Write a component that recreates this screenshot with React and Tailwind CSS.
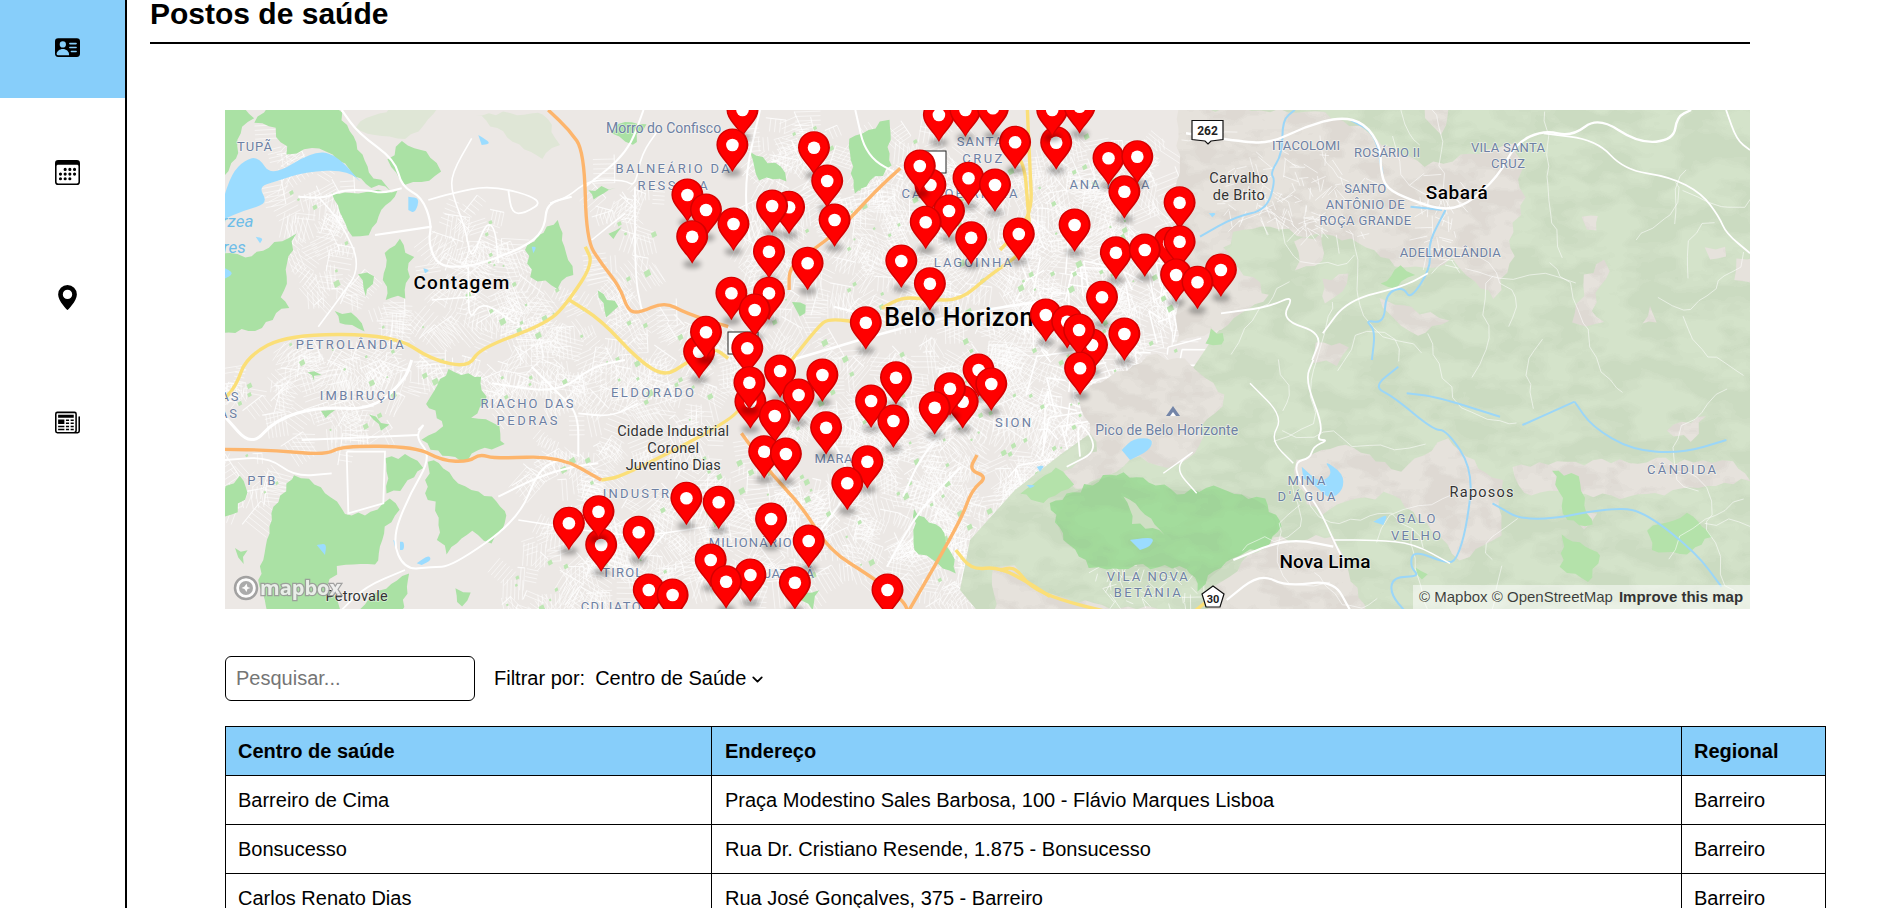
import React from "react";
import { BsPersonVcardFill, BsCalendar3, BsGeoAltFill, BsNewspaper } from "react-icons/bs";
import { ChevronDown } from "lucide-react";

const A = (x, y) => [x / 1.889 - 5, y / 3 - 10];
const B = (x, y) => [775 + x / 2.01, y / 3 - 10];
const C1 = (x, y) => [x / 3, y / 3];
const C2 = (x, y) => [x / 3, y / 3 + 250];
const C3 = (x, y) => [975 + x / 2.851, y / 3];
const C4 = (x, y) => [775 + x / 3, y / 3 + 250];

const toPath = (conv, pts, close) => {
  const p = pts.map(([x, y]) => conv(x, y));
  let d = `M${p[0][0].toFixed(1)} ${p[0][1].toFixed(1)}`;
  for (let i = 1; i < p.length; i++) {
    const prev = p[i - 1];
    const cur = p[i];
    const mx = (prev[0] + cur[0]) / 2;
    const my = (prev[1] + cur[1]) / 2;
    d += ` Q${prev[0].toFixed(1)} ${prev[1].toFixed(1)} ${mx.toFixed(1)} ${my.toFixed(1)}`;
  }
  const l = p[p.length - 1];
  d += ` L${l[0].toFixed(1)} ${l[1].toFixed(1)}`;
  return close ? d + "Z" : d;
};

function rng(seed) {
  let s = seed;
  return () => {
    s = (s * 1664525 + 1013904223) % 4294967296;
    return s / 4294967296;
  };
}

const rough = (conv, pts, seed, amp = 2.6, step = 7) => {
  const r = rng(seed * 97 + 13);
  const p = pts.map(([x, y]) => conv(x, y));
  let d = "";
  for (let i = 0; i < p.length; i++) {
    const a = p[i];
    const b = p[(i + 1) % p.length];
    const dx = b[0] - a[0];
    const dy = b[1] - a[1];
    const len = Math.hypot(dx, dy) || 1;
    const n = Math.max(1, Math.round(len / step));
    for (let k = 0; k < n; k++) {
      const t = k / n;
      const off = (r() - 0.5) * 2 * amp;
      const x = a[0] + dx * t - (dy / len) * off;
      const y = a[1] + dy * t + (dx / len) * off;
      d += `${d ? "L" : "M"}${x.toFixed(1)} ${y.toFixed(1)}`;
    }
  }
  return d + "Z";
};

const urbanPatches = [
  [55, 25, 50, 40], [60, 80, 80, 70], [80, 150, 60, 40], [220, 85, 60, 70], [240, 130, 60, 50], [210, 160, 120, 60], [155, 190, 60, 30], [290, 180, 80, 60],
  [60, 225, 120, 50], [0, 255, 70, 40], [100, 250, 90, 50], [170, 250, 100, 30], [50, 300, 130, 25], [300, 215, 60, 60], [270, 250, 160, 45], [380, 70, 50, 100],
  [380, 170, 40, 60], [370, 230, 70, 70], [440, 210, 90, 90], [320, 320, 80, 30], [405, 300, 80, 50], [300, 340, 90, 40], [0, 340, 50, 60], [320, 395, 100, 60],
  [280, 440, 120, 60], [400, 380, 100, 90], [480, 350, 130, 130], [530, 10, 90, 60], [530, 70, 120, 70], [540, 140, 60, 100], [620, 100, 100, 100], [640, 10, 100, 90],
  [560, 240, 130, 90], [640, 280, 110, 90], [600, 370, 120, 90], [700, 190, 120, 130], [720, 60, 110, 130], [800, 120, 110, 110], [810, 60, 90, 80], [780, 240, 120, 80],
  [690, 320, 120, 100], [780, 300, 90, 110], [830, 20, 110, 60], [880, 70, 100, 130], [900, 190, 50, 60], [680, 420, 100, 70], [780, 420, 70, 70], [810, 340, 60, 90],
  [1000, 50, 70, 60], [1040, 50, 50, 50], [1180, 55, 50, 50], [1200, 100, 40, 30], [860, 440, 100, 50], [1030, 140, 30, 30], [985, 20, 30, 40], [1190, 10, 40, 40],
];

function Streets() {
  const r = rng(7);
  let fine = "";
  let med = "";
  urbanPatches.forEach(([x, y, w, h]) => {
    const groups = Math.round((w * h) / 170);
    for (let g = 0; g < groups; g++) {
      const gx = x + r() * w;
      const gy = y + r() * h;
      const ang = (r() * 180 * Math.PI) / 180;
      const cos = Math.cos(ang);
      const sin = Math.sin(ang);
      const len = 10 + r() * 18;
      const n = 2 + Math.floor(r() * 5);
      const gap = 3.5 + r() * 2;
      for (let k = 0; k < n; k++) {
        const ox = gx - sin * k * gap;
        const oy = gy + cos * k * gap;
        fine += `M${ox.toFixed(1)} ${oy.toFixed(1)}l${(cos * len).toFixed(1)} ${(sin * len).toFixed(1)}`;
      }
      if (r() > 0.6) {
        med += `M${gx.toFixed(1)} ${gy.toFixed(1)}l${(-sin * n * gap).toFixed(1)} ${(cos * n * gap).toFixed(1)}`;
      }
    }
  });
  let grid = "";
  for (let i = 0; i < 80; i++) {
    const x = 790 + r() * 170;
    const y = 130 + r() * 230;
    grid += `M${x.toFixed(1)} ${y.toFixed(1)}l${(46 * r() - 5).toFixed(1)} ${(24 * r() - 12).toFixed(1)}`;
    grid += `M${x.toFixed(1)} ${y.toFixed(1)}l${(12 - 24 * r()).toFixed(1)} ${(40 * r()).toFixed(1)}`;
  }
  return (
    <g fill="none" stroke="#fff">
      <path d={fine} strokeWidth="0.8" opacity="0.7" />
      <path d={med} strokeWidth="1.1" opacity="0.8" />
      <path d={grid} strokeWidth="1.5" />
    </g>
  );
}

function Specks() {
  const r = rng(55);
  let d = "";
  urbanPatches.forEach(([x, y, w, h]) => {
    const n = Math.round((w * h) / 1100);
    for (let i = 0; i < n; i++) {
      const px = x + r() * w;
      const py = y + r() * h;
      const s = 1.5 + r() * 4;
      d += `M${px.toFixed(1)} ${py.toFixed(1)}l${s.toFixed(1)} ${(-s * 0.6).toFixed(1)}l${(s * 0.4).toFixed(1)} ${s.toFixed(1)}l${(-s).toFixed(1)} ${(s * 0.6).toFixed(1)}z`;
    }
  });
  return <path d={d} fill="#bde6b3" />;
}

function ThinTrails() {
  const r = rng(33);
  let d = "";
  for (let i = 0; i < 38; i++) {
    let x = 1000 + r() * 520;
    let y = 20 + r() * 460;
    let a = r() * 6.28;
    d += `M${x.toFixed(1)} ${y.toFixed(1)}`;
    const steps = 5 + Math.floor(r() * 9);
    for (let k = 0; k < steps; k++) {
      a += (r() - 0.5) * 1.4;
      x += Math.cos(a) * (6 + r() * 12);
      y += Math.sin(a) * (6 + r() * 12);
      d += `L${x.toFixed(1)} ${y.toFixed(1)}`;
    }
  }
  return <path d={d} fill="none" stroke="#fff" strokeWidth="0.8" opacity="0.7" />;
}

const greens = [
  [C1, [[-9, -9], [60, -9], [90, 30], [50, 50], [40, 110], [20, 160], [-9, 200]]],
  [C1, [[90, 40], [130, -9], [340, -9], [390, 100], [430, 190], [500, 240], [420, 225], [340, 150], [260, 110], [190, 130], [150, 60]]],
  [C1, [[530, 95], [610, 120], [645, 180], [590, 220], [540, 225], [490, 150]]],
  [C1, [[320, 250], [520, 245], [470, 300], [430, 370], [380, 380], [360, 320]]],
  [C1, [[480, 430], [520, 390], [560, 440], [540, 560], [480, 570]]],
  [C1, [[-9, 430], [60, 440], [130, 410], [210, 370], [200, 420], [170, 560], [190, 590], [90, 660], [-9, 670]]],
  [C1, [[900, 420], [940, 380], [1000, 330], [1040, 490], [1000, 530], [920, 500]]],
  [C1, [[1090, 240], [1170, 230], [1100, 270]]],
  [C1, [[1150, 370], [1190, 350], [1160, 390]]],
  [C1, [[1120, 540], [1180, 590], [1150, 620]]],
  [C1, [[1180, 40], [1260, 40], [1220, 110], [1160, 70]]],
  [C1, [[400, 490], [450, 500], [420, 560]]],
  [C1, [[330, 600], [400, 620], [420, 660], [340, 640]]],
  [C2, [[600, 130], [650, 60], [670, 30], [770, 50], [780, 130], [740, 170], [820, 200], [840, 260], [760, 270], [730, 300], [650, 290], [590, 240], [650, 200], [640, 170]]],
  [C2, [[480, 290], [560, 290], [590, 320], [540, 380], [490, 400]]],
  [C2, [[610, 300], [640, 310], [720, 380], [800, 410], [850, 470], [800, 550], [740, 510], [670, 580], [640, 540], [630, 430], [605, 420]]],
  [C2, [[-9, 400], [40, 350], [70, 400], [20, 470], [-9, 470]]],
  [C2, [[210, 340], [290, 380], [360, 460], [440, 460], [490, 420], [525, 450], [480, 500], [450, 620], [340, 620], [310, 680], [350, 760], [130, 760], [100, 660], [130, 540], [140, 460]]],
  [C2, [[480, 680], [550, 640], [530, 760], [390, 760]]],
  [C2, [[250, 30], [285, 40], [260, 65]]],
  [C2, [[290, 160], [330, 150], [300, 175]]],
  [C2, [[430, 170], [490, 190], [470, 210]]],
  [C2, [[30, 570], [65, 570], [50, 615]]],
  [C2, [[690, 690], [740, 700], [710, 740]]],
  [A, [[1000, 160], [1060, 200], [1070, 240], [1020, 240]]],
  [A, [[1190, 120], [1260, 60], [1270, 200], [1200, 280]]],
  [A, [[1080, 610], [1110, 620], [1095, 650]]],
  [A, [[1310, 1230], [1370, 1300], [1390, 1420], [1310, 1350]]],
  [A, [[1090, 1480], [1130, 1470], [1120, 1530]]],
];
const paleGreens = [
  [C1, [[390, 50], [500, -9], [640, -9], [600, 50], [540, 90], [470, 80]]],
  [C1, [[750, 10], [960, 10], [1000, 100], [950, 150], [830, 70]]],
];
const water = [
  [C1, [[-9, 280], [20, 190], [60, 150], [100, 140], [140, 200], [260, 125], [330, 130], [420, 230], [370, 180], [240, 185], [150, 215], [100, 230], [130, 280], [60, 300], [-9, 330]]],
  [C1, [[760, 75], [800, 100], [770, 105]]],
  [C1, [[550, 260], [585, 265], [570, 310], [550, 300]]],
  [C1, [[-9, 470], [30, 490], [-9, 510]]],
  [C1, [[920, 410], [935, 410], [925, 430]]],
  [C1, [[595, 475], [615, 480], [600, 490]]],
  [C1, [[92, 380], [115, 385], [105, 400]]],
  [C2, [[275, 555], [305, 550], [300, 585]]],
  [C2, [[575, 610], [610, 585], [620, 600], [590, 615]]],
  [C2, [[505, 540], [515, 545], [510, 560]]],
  [C2, [[525, 545], [537, 545], [537, 570], [525, 570]]],
  [C4, [[365, 270], [400, 235], [460, 235], [450, 270], [390, 300]]],
  [C4, [[390, 540], [465, 530], [450, 560], [420, 570]]],
  [C4, [[905, 320], [960, 370], [1000, 340], [970, 300], [1030, 340], [1030, 390], [990, 420], [950, 380], [910, 355]]],
  [C4, [[1120, 485], [1165, 460], [1150, 495]]],
  [C4, [[110, 320], [135, 315], [120, 335]]],
  [C4, [[80, 375], [110, 375], [90, 385]]],
  [C3, [[25, 310], [48, 308], [35, 322]]],
];

const tintD = "M960 -10L1535 -10L1535 510L760 510L735 480L745 430L790 380L835 345L870 320L960 270L990 225L1020 190L990 130Z";
const pinkOnTint = [
  [C3, [[-60, 0], [330, 0], [430, 40], [520, 100], [640, 170], [720, 150], [900, 100], [920, 260], [880, 420], [900, 440], [840, 560], [780, 520], [720, 450], [640, 480], [560, 460], [430, 390], [330, 380], [200, 350], [100, 370], [60, 420], [200, 560], [60, 660], [-60, 700]]],
  [C3, [[1090, 330], [1140, 320], [1130, 360], [1100, 360]]],
  [C3, [[1100, 500], [1150, 450], [1160, 480], [1120, 600], [1150, 630], [1100, 650], [1070, 640]]],
  [C3, [[1440, 420], [1500, 410], [1500, 450], [1450, 450]]],
  [C3, [[640, -9], [710, -9], [690, 70], [660, 50]]],
  [C3, [[510, 570], [600, 600], [710, 630], [620, 680], [550, 630]]],
  [C3, [[270, 400], [350, 370], [350, 460], [280, 480]]],
  [C3, [[350, 510], [420, 490], [410, 550], [360, 580]]],
  [C3, [[1530, 450], [1590, 440], [1590, 520], [1530, 510]]],
  [C3, [[1280, 590], [1300, 630], [1260, 640]]],
  [C3, [[330, 700], [420, 710], [390, 760], [330, 760]]],
  [C4, [[440, -10], [560, -10], [680, 110], [600, 200], [600, 260], [500, 330], [420, 290], [350, 340], [220, 390], [190, 330], [300, 270], [250, 170], [230, 100], [380, 30]]],
  [C4, [[890, 300], [1040, 250], [1200, 330], [1340, 240], [1400, 290], [1500, 360], [1500, 520], [1380, 600], [1300, 510], [1180, 400], [1040, 420], [960, 470], [880, 360]]],
  [C4, [[640, 680], [820, 540], [1000, 530], [1040, 640], [1100, 760], [620, 760]]],
  [C4, [[-20, 620], [40, 620], [130, 700], [330, 740], [600, 760], [-20, 760]]],
  [B, [[1030, 1100], [1300, 1080], [1470, 1090], [1508, 1140], [1300, 1190], [1050, 1180]]],
  [B, [[1340, 990], [1420, 950], [1390, 1020]]],
  [B, [[1160, 1220], [1200, 1240], [1170, 1290]]],
];
const bigGreen = [[150, 430], [220, 400], [330, 340], [430, 350], [530, 400], [640, 380], [790, 420], [845, 500], [790, 560], [700, 600], [630, 650], [600, 690], [560, 620], [320, 620], [270, 620], [190, 540]];
const holeInGreen = [[370, 410], [440, 460], [495, 520], [400, 490]];
const lightGreens = [
  [C3, [[515, 520], [570, 470], [610, 490], [560, 530]]],
  [C3, [[15, 700], [30, 660], [70, 670], [60, 710]]],
  [C4, [[60, 400], [170, 320], [220, 370], [130, 430]]],
  [B, [[1110, 1110], [1160, 1130], [1190, 1280], [1140, 1260]]],
  [B, [[1300, 1290], [1380, 1240], [1430, 1310], [1380, 1370], [1310, 1350]]],
  [B, [[1130, 1300], [1210, 1370], [1180, 1450], [1130, 1400]]],
  [C4, [[1250, 620], [1280, 640], [1260, 660]]],
];

const rivers = [
  [C3, [[270, 0], [235, 30], [235, 130], [200, 190], [215, 210], [190, 300], [100, 320], [0, 380]]],
  [C3, [[430, 30], [500, 70], [520, 190]]],
  [C3, [[600, 290], [690, 300]]],
  [C3, [[700, 300], [650, 400], [660, 470], [600, 570], [580, 530], [530, 550], [525, 640], [470, 630], [500, 660], [490, 750]]],
  [C4, [[1195, 20], [1120, 80], [1180, 110], [1300, 210], [1340, 210], [1420, 330], [1400, 500], [1370, 600], [1340, 610], [1240, 570], [1230, 620], [1260, 650], [1180, 650], [1170, 700], [1220, 760]]],
  [C4, [[1220, 100], [1310, 110], [1500, 170]]],
  [B, [[1155, 905], [1190, 980], [1270, 1050], [1370, 1060], [1460, 1020]]],
  [B, [[1050, 975], [1155, 905]]],
  [B, [[990, 1210], [1060, 1270], [1240, 1220], [1300, 1240], [1400, 1360], [1450, 1460]]],
];
const whites = [
  [C3, 2.4, [[-40, 70], [120, 95], [200, 100], [300, 50], [400, 20], [470, 40], [515, 110], [515, 180], [530, 235], [600, 270], [690, 300], [760, 285], [850, 200], [900, 100], [980, 60], [1060, 80], [1135, 20], [1250, 100], [1350, 90], [1360, 20], [1400, 0]]],
  [C3, 1.8, [[980, 70], [1130, 90], [1210, 180], [1340, 200], [1430, 250], [1480, 320], [1500, 370], [1568, 430]]],
  [C3, 1.8, [[1500, 0], [1530, 90], [1568, 120]]],
  [C3, 1.8, [[320, 750], [350, 670], [230, 630], [270, 555], [200, 590], [60, 610]]],
  [C3, 1.8, [[350, 670], [420, 570], [580, 530], [650, 490]]],
  [C4, 1.8, [[940, 0], [915, 60], [970, 200], [950, 240], [985, 240], [940, 260], [930, 295], [885, 305], [895, 360], [960, 450], [1000, 540], [1030, 600]]],
  [C4, 2.2, [[700, 600], [820, 550], [900, 540], [1000, 560]]],
  [C4, 2.2, [[680, 720], [780, 640], [860, 680], [1000, 660], [1050, 750]]],
  [C4, 1.5, [[1000, 540], [1130, 540], [1240, 550], [1350, 610]]],
  [C4, 1.4, [[750, 70], [850, 170], [810, 240], [880, 310]]],
  [C4, 1.4, [[490, 340], [600, 260], [520, 320], [590, 400]]],
  [C4, 1.8, [[200, 320], [300, 270], [230, 170], [240, 290]]],
  [C1, 2.2, [[350, 0], [400, 70], [510, 150], [530, 230], [590, 260], [620, 340], [610, 400], [640, 470], [730, 470], [800, 450], [920, 400], [960, 350], [965, 280], [1040, 260]]],
  [C1, 2, [[220, 260], [300, 265], [350, 240], [430, 240], [470, 250], [530, 235]]],
  [C1, 1.6, [[280, 260], [350, 340], [410, 470], [340, 570], [280, 650]]],
  [C1, 2.2, [[620, 350], [450, 375]]],
  [C1, 1.6, [[740, 85], [680, 190], [680, 250], [720, 350], [740, 460], [780, 340], [810, 350], [820, 460]]],
  [C1, 1.8, [[610, 270], [680, 250], [800, 225], [960, 270], [900, 310], [860, 310], [850, 240]]],
  [C1, 1.6, [[975, 280], [1030, 260], [1090, 210], [1200, 210], [1230, 230], [1250, 130], [1300, 60]]],
  [C1, 1.8, [[1230, 230], [1230, 500], [1250, 600]]],
  [C1, 1.6, [[1100, 390], [1200, 310]]],
  [C1, 1.6, [[730, 470], [730, 640], [770, 570], [870, 640]]],
  [C1, 1.6, [[620, 570], [750, 560]]],
  [C2, 3, [[0, 170], [80, 260], [150, 180], [280, 140], [440, 150], [540, 60], [560, 0]]],
  [C2, 2, [[230, 240], [580, 225]]],
  [C2, 2, [[580, 210], [600, 190], [570, 230], [620, 290], [550, 410], [500, 540], [540, 630], [620, 620], [680, 620], [880, 480], [940, 330], [1000, 300]]],
  [C2, 2, [[820, 410], [940, 350], [1040, 320], [1120, 310]]],
  [C2, 2, [[800, 70], [1000, 100], [1100, 20], [1200, 0]]],
  [C2, 2, [[920, 20], [1000, 100], [1060, 160], [1060, 290]]],
  [C2, 1.8, [[1060, 160], [1160, 170], [1240, 130]]],
  [C2, 1.8, [[0, 300], [130, 290], [210, 350], [320, 340]]],
  [C2, 1.8, [[540, 630], [420, 680], [350, 750]]],
  [C2, 1.6, [[880, 480], [1200, 530], [1320, 520], [1440, 500]]],
  [C2, 1.6, [[1250, 600], [1320, 520]]],
  [A, 2.6, [[1080, 780], [1250, 700], [1400, 640], [1568, 600]]],
  [A, 2, [[800, 30], [770, 160], [690, 260]]],
  [A, 2, [[1020, 30], [990, 240], [1000, 420]]],
  [A, 2, [[1200, 30], [1220, 170], [1290, 230]]],
  [A, 2, [[1160, 620], [1310, 680]]],
  [A, 2, [[1150, 1000], [1200, 1150], [1130, 1300]]],
  [A, 2, [[1400, 1100], [1320, 1230], [1260, 1400]]],
  [A, 2, [[1430, 900], [1330, 1050], [1290, 1190]]],
];
const whiteBlock = [[365, 275], [480, 275], [475, 430], [370, 460], [365, 275]];

const yellowA = [
  [[0, 910], [30, 860], [50, 770], [130, 702], [330, 705], [400, 780], [470, 802], [490, 745], [620, 670], [660, 600], [705, 490], [690, 440]],
  [[660, 600], [720, 660], [790, 780], [840, 830], [880, 790], [930, 740], [960, 775]],
  [[1075, 790], [1130, 680], [1150, 655], [1220, 670]],
  [[1250, 625], [1290, 590], [1340, 600], [1400, 600], [1450, 530], [1532, 440], [1525, 300], [1520, 200], [1500, 150]],
  [[720, 1140], [760, 1130], [980, 950], [980, 900]],
  [[1390, 1350], [1420, 1410], [1470, 1400], [1530, 1450], [1568, 1490]],
];
const yellowB = [
  [[0, 1410], [30, 1400], [60, 1460], [120, 1500], [215, 1535]],
  [[390, 1535], [415, 1505]],
  [[55, 30], [60, 200], [65, 350], [0, 450]],
];
const orangeA = [
  [[620, 30], [660, 90], [688, 155], [692, 420], [720, 490], [755, 560], [770, 630], [790, 640], [840, 605], [880, 640], [960, 680]],
  [[985, 1000], [1040, 1120], [1100, 1220], [1150, 1350], [1230, 1430], [1290, 1500], [1300, 1535]],
  [[1075, 570], [1075, 500], [1120, 450], [1170, 390], [1240, 270], [1285, 205]],
  [[1, 1048], [100, 1050], [200, 1065], [230, 1038], [370, 1040], [420, 1082], [470, 1085], [490, 1062], [520, 1076], [640, 1068], [720, 1140]],
  [[1430, 1065], [1415, 1110], [1450, 1130], [1420, 1170], [1400, 1260], [1300, 1535]],
];

const labels = [
  ["A", "TUPÃ", 65, 140, 35], ["A", "Morro do Confisco", 838, 85, 115, "m"], ["A", "BALNEÁRIO DA", 855, 205, 114], ["A", "RESSACA", 855, 255, 70],
  ["A", "PETROLÂNDIA", 245, 732, 108], ["A", "IMBIRUÇU", 260, 886, 76], ["A", "RIACHO DAS", 580, 910, 93], ["A", "PEDRAS", 580, 960, 61],
  ["A", "ELDORADO", 817, 877, 83], ["A", "PTB", 78, 1142, 28], ["A", "INDUSTRIAL", 810, 1180, 92], ["A", "MILIONÁRIOS", 1010, 1328, 92],
  ["A", "TIROL", 760, 1418, 40], ["A", "CDLIATO", 738, 1520, 60], ["A", "JATOBÁ", 1075, 1420, 50], ["A", "MARAJÓ", 1175, 1075, 55],
  ["A", "SANTA", 1435, 125, 46], ["A", "CRUZ", 1440, 175, 40], ["A", "CACHOEIRINHA", 1397, 280, 116], ["A", "LAGOINHA", 1422, 488, 78], ["A", "SION", 1498, 966, 36],
  ["A", "AS", 18, 890, 18], ["A", "AS", 15, 940, 18],
  ["B", "ANA LÚCIA", 220, 252, 80], ["B", "ITACOLOMI", 615, 137, 68], ["B", "ROSÁRIO II", 778, 158, 66], ["B", "VILA SANTA", 1021, 143, 74], ["B", "CRUZ", 1021, 190, 34],
  ["B", "SANTO", 734, 265, 42], ["B", "ANTÔNIO DE", 734, 313, 79], ["B", "ROÇA GRANDE", 734, 360, 92], ["B", "ADELMOLÂNDIA", 905, 458, 101],
  ["B", "Pico de Belo Horizonte", 335, 992, 143, "m"], ["B", "MINA", 616, 1140, 38], ["B", "D'ÁGUA", 616, 1190, 58], ["B", "GALO", 836, 1255, 39], ["B", "VELHO", 836, 1305, 50],
  ["B", "CÂNDIDA", 1370, 1107, 69], ["B", "VILA NOVA", 296, 1430, 81], ["B", "BETÂNIA", 296, 1478, 67],
];
const darkLabels = [
  ["A", "Cidade Industrial", 856, 993, 112], ["A", "Coronel", 856, 1045, 52], ["A", "Juventino Dias", 856, 1095, 95], ["A", "Petrovale", 258, 1487, 62],
  ["B", "Carvalho", 480, 234, 59], ["B", "de Brito", 480, 285, 52], ["B", "Raposos", 968, 1175, 64],
];
const bigLabels = [
  ["A", "Contagem", 456, 545, 96, 19], ["B", "Sabará", 918, 275, 62, 19], ["B", "Nova Lima", 653, 1383, 91, 19], ["A", "Belo Horizonte", 1417, 652, 172, 25],
];

const pinsA = [
  [987, 30], [968, 135], [1122, 143], [1147, 243], [883, 285], [918, 330], [892, 410], [970, 372], [1075, 322], [1043, 318], [1161, 360], [1037, 455], [1110, 490],
  [966, 580], [1037, 580], [1010, 630], [905, 755], [918, 697], [996, 745], [1002, 905], [1000, 848], [1058, 813], [1138, 825], [1093, 885], [1048, 948], [1145, 983],
  [1028, 1055], [1069, 1062], [1223, 1085], [1185, 1150], [881, 1195], [942, 1207], [1041, 1257], [720, 1335], [715, 1235], [659, 1270], [791, 1297], [1112, 1323],
  [927, 1380], [1002, 1425], [956, 1445], [1086, 1448], [810, 1470], [855, 1485], [1261, 1470], [1220, 668], [1287, 483], [1341, 551], [1342, 255], [1322, 198],
  [1414, 235], [1464, 255], [1377, 333], [1333, 367], [1419, 413], [1509, 402], [1502, 127], [1358, 45], [1408, 30], [1460, 25], [1277, 833], [1230, 903], [1272, 963],
  [1433, 810], [1403, 905], [1457, 852], [1379, 866], [1350, 923],
];
const pinsB = [
  [113, 128], [105, 30], [160, 20], [218, 175], [276, 170], [250, 275], [361, 308], [150, 375], [233, 458], [340, 430], [291, 450], [361, 425], [444, 510], [354, 525], [397, 547],
  [205, 592], [92, 645], [135, 665], [185, 735], [159, 690], [250, 702], [161, 805],
];

function Pin({ x, y }) {
  return (
    <g transform={`translate(${(x - 16).toFixed(1)} ${(y - 16.5).toFixed(1)})`}>
      <ellipse cx="16" cy="44" rx="9" ry="4" fill="#000" opacity="0.3" filter="url(#blur)" />
      <path d="M16 0C7 0 0 7 0 16.5C0 26 11 34 16 43.5C21 34 32 26 32 16.5C32 7 25 0 16 0Z" fill="#d40000" />
      <path d="M16 1C8 1 1.5 8 1.5 16.5C1.5 25 12 33 16 41.5C20 33 30 25 30 16.5C30 8 24 1 16 1Z" fill="#ff0000" />
      <circle cx="16" cy="16.5" r="6.3" fill="#fff" />
    </g>
  );
}

function Streets2() {
  const r = rng(91);
  const zones = [[1030, 40, 80, 80], [1075, 65, 70, 60], [1185, 60, 55, 50], [1195, 110, 40, 45], [870, 450, 110, 45], [1000, 55, 50, 60]];
  let fine = "";
  zones.forEach(([x, y, w, h]) => {
    for (let g = 0; g < (w * h) / 120; g++) {
      const gx = x + r() * w;
      const gy = y + r() * h;
      const a = r() * 3.14;
      const len = 6 + r() * 14;
      fine += `M${gx.toFixed(1)} ${gy.toFixed(1)}l${(Math.cos(a) * len).toFixed(1)} ${(Math.sin(a) * len).toFixed(1)}`;
    }
  });
  return <path d={fine} fill="none" stroke="#fff" strokeWidth="0.8" opacity="0.75" />;
}

function MapArt() {
  const conv = (c) => (c === "A" ? A : B);
  const halo = { paintOrder: "stroke", stroke: "rgba(255,255,255,0.55)", strokeWidth: 1.5 };
  return (
    <svg viewBox="0 0 1525 499" width="1525" height="499" className="block" style={{ fontFamily: "Roboto, sans-serif" }}>
      <defs>
        <filter id="blur" x="-50%" y="-50%" width="200%" height="200%">
          <feGaussianBlur stdDeviation="2.5" />
        </filter>
        <filter id="hill" x="0" y="0" width="100%" height="100%">
          <feTurbulence type="fractalNoise" baseFrequency="0.022 0.04" numOctaves="3" seed="8" />
          <feColorMatrix type="matrix" values="0 0 0 0 0.27  0 0 0 0 0.36  0 0 0 0 0.22  3.4 0 0 0 -1.2" />
          <feComponentTransfer>
            <feFuncA type="discrete" tableValues="0 0.03 0.06 0.09 0.13" />
          </feComponentTransfer>
        </filter>
        <filter id="hillPink" x="0" y="0" width="100%" height="100%">
          <feTurbulence type="fractalNoise" baseFrequency="0.03 0.05" numOctaves="3" seed="3" />
          <feColorMatrix type="matrix" values="0 0 0 0 0.38  0 0 0 0 0.33  0 0 0 0 0.3  3.4 0 0 0 -1.2" />
          <feComponentTransfer>
            <feFuncA type="discrete" tableValues="0 0 0.05 0.09 0.13" />
          </feComponentTransfer>
        </filter>
        <clipPath id="bgClip">
          <path d={toPath(C4, bigGreen, true)} />
        </clipPath>
        <clipPath id="pinkClip">
          {pinkOnTint.map(([c, p], i) => (
            <path key={i} d={rough(c, p, i + 100, 3.5, 9)} />
          ))}
        </clipPath>
        <clipPath id="tintClip">
          <path d={tintD} />
        </clipPath>
      </defs>
      <rect width="1525" height="499" fill="#ece8e5" />
      <Streets />
      <Specks />
      {paleGreens.map(([c, p], i) => (
        <path key={i} d={rough(c, p, i + 200)} fill="#dfe6d6" />
      ))}
      <path d={tintD} fill="#d4e3ca" />
      <rect width="1525" height="499" filter="url(#hill)" clipPath="url(#tintClip)" />
      {pinkOnTint.map(([c, p], i) => (
        <path key={i} d={rough(c, p, i + 100, 3.5, 9)} fill="#e6e2dc" />
      ))}
      <rect width="1525" height="499" filter="url(#hillPink)" clipPath="url(#pinkClip)" />
      <Streets2 />
      <path d={rough(C4, bigGreen, 5, 3, 7)} fill="#a3dc9c" />
      <rect width="1525" height="499" filter="url(#hill)" clipPath="url(#bgClip)" />
      <path d={rough(C4, holeInGreen, 6)} fill="#cfdfc4" />
      {lightGreens.map(([c, p], i) => (
        <path key={i} d={rough(c, p, i + 300)} fill="#b4e2aa" />
      ))}
      {greens.map(([c, p], i) => (
        <path key={i} d={rough(c, p, i + 1)} fill="#aae1a4" />
      ))}
      <ThinTrails />
      {water.map(([c, p], i) => (
        <path key={i} d={toPath(c, p, true)} fill="#9bdcff" />
      ))}
      {rivers.map(([c, p], i) => (
        <path key={i} d={toPath(c, p)} fill="none" stroke="#9bd6f8" strokeWidth="2" />
      ))}
      <text x="-3" y="117" fontSize="17" fontStyle="italic" fill="#6ebde8">rzea</text>
      <text x="-2" y="143" fontSize="17" fontStyle="italic" fill="#6ebde8">res</text>
      {whites.map(([c, w, p], i) => (
        <path key={i} d={toPath(c, p)} fill="none" stroke="#fff" strokeWidth={w} />
      ))}
      <path d={`M${whiteBlock.map(([x, y]) => C2(x, y).join(" ")).join("L")}`} fill="none" stroke="#fff" strokeWidth="1.8" />
      {yellowA.map((p, i) => (
        <path key={i} d={toPath(A, p)} fill="none" stroke="#fbdf78" strokeWidth="3.4" strokeLinejoin="round" />
      ))}
      {yellowB.map((p, i) => (
        <path key={i} d={toPath(B, p)} fill="none" stroke="#fbdf78" strokeWidth="3.4" />
      ))}
      {orangeA.map((p, i) => (
        <path key={i} d={toPath(A, p)} fill="none" stroke="#fdb56c" strokeWidth="3.4" strokeLinejoin="round" />
      ))}
      {labels.map(([c, t, x, y, w, kind], i) => {
        const [px, py] = conv(c)(x, y);
        return (
          <text key={i} x={px} y={py + 4.8} textAnchor="middle" fontSize={kind ? 14 : 13} fill="#6d80a3" textLength={w} style={halo}>
            {t}
          </text>
        );
      })}
      {darkLabels.map(([c, t, x, y, w], i) => {
        const [px, py] = conv(c)(x, y);
        return (
          <text key={i} x={px} y={py + 5} textAnchor="middle" fontSize="14.5" fill="#333" textLength={w} style={halo}>
            {t}
          </text>
        );
      })}
      {bigLabels.map(([c, t, x, y, w, s], i) => {
        const [px, py] = conv(c)(x, y);
        return (
          <text key={i} x={px} y={py + s * 0.36} textAnchor="middle" fontSize={s} fontWeight="500" fill="#000" textLength={w} style={halo}>
            {t}
          </text>
        );
      })}
      <path d="M967 10.5h31v19l-12 1.5-3 3-3-3-13-1.5z" fill="#fff" stroke="#111" strokeWidth="1.2" />
      <text x="982.5" y="25" textAnchor="middle" fontSize="12" fontWeight="700" fill="#222">262</text>
      <path d="M988 476l11 8-4 13h-14l-4-13z" fill="#fff" stroke="#111" strokeWidth="1.2" />
      <text x="988" y="493" textAnchor="middle" fontSize="11" fontWeight="700" fill="#222">30</text>
      <path d="M941 306l7-10 7 10z" fill="#7385a8" />
      <path d="M945 306l3-4 3 4z" fill="#fff" />
      <rect x="691" y="41" width="30" height="22" fill="#fff" stroke="#222" />
      <rect x="503" y="222" width="30" height="22" fill="#fff" stroke="#222" />
      {pinsA.map(([x, y], i) => {
        const [px, py] = A(x, y);
        return <Pin key={`a${i}`} x={px} y={py} />;
      })}
      {pinsB.map(([x, y], i) => {
        const [px, py] = B(x, y);
        return <Pin key={`b${i}`} x={px} y={py} />;
      })}
    </svg>
  );
}

const rows = [
  ["Barreiro de Cima", "Praça Modestino Sales Barbosa, 100 - Flávio Marques Lisboa", "Barreiro"],
  ["Bonsucesso", "Rua Dr. Cristiano Resende, 1.875 - Bonsucesso", "Barreiro"],
  ["Carlos Renato Dias", "Rua José Gonçalves, 375 - Barreiro", "Barreiro"],
];

export default function App() {
  return (
    <div className="flex h-[908px] w-full overflow-hidden bg-white text-black text-[20px]" style={{ fontFamily: '"Liberation Sans", Arial, sans-serif' }}>
      <aside className="h-[912px] w-[127px] shrink-0 border-r-2 border-black -mt-[4px] flex flex-col gap-[23px]">
        <div className="h-[102px] pl-[10px] bg-[#87cefa] flex items-center justify-center">
          <BsPersonVcardFill size={25} />
        </div>
        <div className="h-[102px] pl-[10px] flex items-center justify-center">
          <BsCalendar3 size={25} />
        </div>
        <div className="h-[102px] pl-[10px] flex items-center justify-center">
          <BsGeoAltFill size={25} />
        </div>
        <div className="h-[102px] pl-[10px] flex items-center justify-center">
          <BsNewspaper size={25} />
        </div>
      </aside>
      <main className="ml-[23px] w-[1675px] shrink-0">
        <h1 className="w-[1600px] h-[44px] border-b-2 border-black text-[30px] font-bold leading-[27px]">Postos de saúde</h1>
        <div className="ml-[75px] mt-[66px] relative w-[1525px] h-[499px] overflow-hidden">
          <MapArt />
          <div className="absolute left-[8px] bottom-[8px] flex items-center gap-[1px] opacity-90">
            <svg width="26" height="26" viewBox="0 0 26 26">
              <circle cx="13" cy="13" r="11" fill="#fff" stroke="#9a9a9a" strokeWidth="2.5" />
              <circle cx="13" cy="13" r="7" fill="#a5a5a5" />
              <path d="M13.5 8.5l1 3.5 3 1-3 1-1 3-2-3-3-1 3-1.5z" fill="#fff" />
            </svg>
            <span className="text-[20px] font-bold leading-none" style={{ fontFamily: '"Open Sans", sans-serif', WebkitTextStroke: "2.5px #9a9a9a", paintOrder: "stroke fill", color: "#f0f0f0" }}>mapbox</span>
          </div>
          <div className="absolute right-0 bottom-0 h-[24px] w-[337px] bg-white/50 flex items-center pl-[6px] text-[15px] text-black/75 whitespace-nowrap">
            <span>© Mapbox © OpenStreetMap</span>
            <span className="ml-[6px] font-bold text-[#333]">Improve this map</span>
          </div>
        </div>
        <div className="ml-[75px] mt-[47px] flex items-center h-[45px]">
          <input placeholder="Pesquisar..." className="w-[250px] h-[45px] border border-black rounded-[6px] px-[10px] text-[20px] placeholder:text-[#757575] bg-white" />
          <span className="ml-[19px] -mt-[1px]">Filtrar por:</span>
          <span className="ml-[10px] -mt-[1px]">Centro de Saúde</span>
          <ChevronDown size={17} strokeWidth={2.5} className="ml-[3px] mt-[1px]" />
        </div>
        <table className="ml-[75px] mt-[25px] w-[1600px] table-fixed border-collapse">
          <colgroup>
            <col className="w-[486px]" />
            <col className="w-[970px]" />
            <col className="w-[144px]" />
          </colgroup>
          <thead>
            <tr className="h-[49px] bg-[#87cefa]">
              <th className="border border-black px-[12px] text-left font-bold">Centro de saúde</th>
              <th className="border border-black px-[13px] text-left font-bold">Endereço</th>
              <th className="border border-black px-[12px] text-left font-bold">Regional</th>
            </tr>
          </thead>
          <tbody>
            {rows.map((r) => (
              <tr key={r[0]} className="h-[49px]">
                <td className="border border-black px-[12px]">{r[0]}</td>
                <td className="border border-black px-[13px]">{r[1]}</td>
                <td className="border border-black px-[12px]">{r[2]}</td>
              </tr>
            ))}
          </tbody>
        </table>
      </main>
    </div>
  );
}
